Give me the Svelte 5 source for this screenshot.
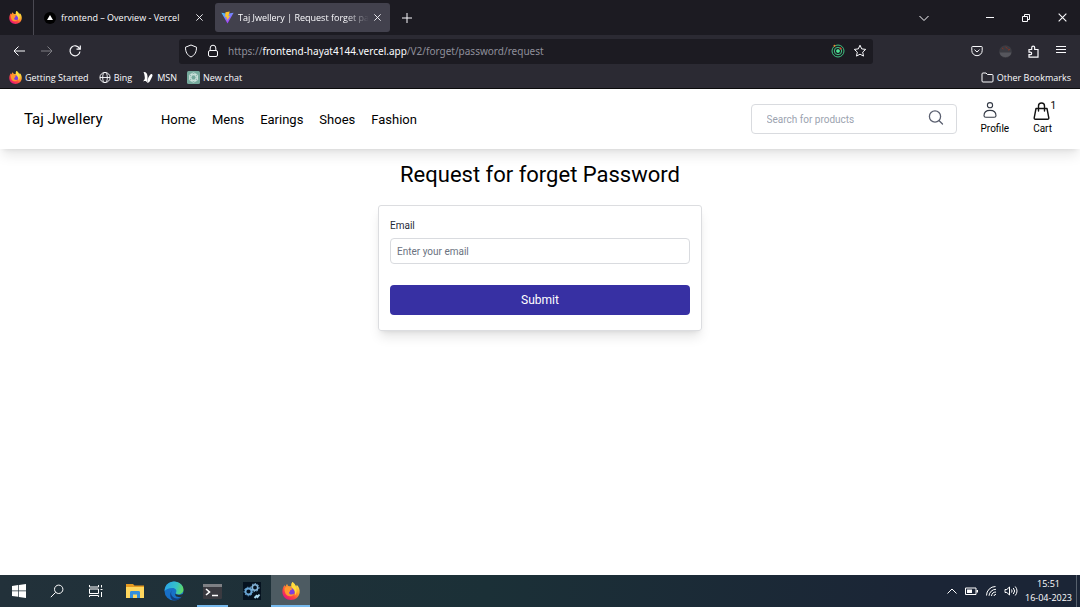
<script lang="ts">
    const categories = ['Home', 'Mens', 'Earings', 'Shoes', 'Fashion'];

    let search = $state('');
    let email = $state('');

    const cartCount = 1;
</script>

{#snippet firefox(size: number)}
    <svg width={size} height={size} viewBox="0 0 24 24" aria-hidden="true">
        <defs>
            <linearGradient id="fox-body" x1="0.85" y1="0.1" x2="0.2" y2="0.95">
                <stop offset="0" stop-color="#fff04a" />
                <stop offset="0.35" stop-color="#ffa52b" />
                <stop offset="0.65" stop-color="#ff4a3d" />
                <stop offset="1" stop-color="#e4127d" />
            </linearGradient>
        </defs>
        <path fill="url(#fox-body)" d="M14 0c3 2 4 4 4.500 6 1-.5 1-1.500 1-2.500C22.500 6 24 9.500 23.500 14c-.6 6-5.500 10-11.500 10C5.500 24 .5 19.500.5 13c0-3.500 1-6.500 3-9 .2 1 .5 1.500 1 2C5.500 4 6 3 7 2.500 7 4 8 5 9.500 5.500h3C12 3.500 12.500 1.500 14 0z" />
        <circle cx="12" cy="12.500" r="5" fill="#7c3fe0" />
        <path fill="#ff9a2e" d="M3.500 8c3-2.500 6-1.500 7.500 0l3 .5c-.3 1.500-2.500 1.800-3 2.500-.5 1 0 2-1.500 2.500-.5 3 3.500 4 6.500 2-2 5-9.500 4.500-11.500-.5C3.500 12.500 3 10 3.500 8z" />
        <path fill="#ffdc3e" d="M14 0c3 2.500 4.500 5 5 8.500 1 3.500.5 7-2 9.500 1-3 .5-6-1.500-8C13 7.500 11.500 4 14 0z" />
    </svg>
{/snippet}

{#snippet closeIcon(size: number)}
    <svg class="line" width={size} height={size} viewBox="0 0 10 10" aria-hidden="true">
        <path d="M1.500 1.500l7 7M8.500 1.500l-7 7" />
    </svg>
{/snippet}

<div class="screen">
    <div class="chrome">
        <div class="tabs">
            <div class="pinned">{@render firefox(13)}</div>
            <div class="tab">
                <svg width="12" height="12" viewBox="0 0 12 12" aria-hidden="true">
                    <circle cx="6" cy="6" r="6" fill="#000" />
                    <path d="M6 3l3 5H3z" fill="#fff" />
                </svg>
                <span class="title">frontend – Overview - Vercel</span>
                <button aria-label="Close tab">{@render closeIcon(9)}</button>
            </div>
            <div class="tab active">
                <svg width="13" height="13" viewBox="0 0 32 32" aria-hidden="true">
                    <defs>
                        <linearGradient id="vite" x1="0" y1="0" x2="0.6" y2="1">
                            <stop offset="0" stop-color="#41d1ff" />
                            <stop offset="1" stop-color="#b32dfe" />
                        </linearGradient>
                    </defs>
                    <path fill="url(#vite)" d="M1 4l14 2.500L31 4 16 31z" />
                    <path fill="#ffc329" d="M21.500 1L11 3l-.8 12 4-.8-1 5 3-.8-1.500 7L22 12l-4 .8z" />
                </svg>
                <span class="title faded">Taj Jwellery | Request forget pas</span>
                <button aria-label="Close tab">{@render closeIcon(9)}</button>
            </div>
            <button class="new-tab" aria-label="New tab">
                <svg class="line" width="12" height="12" viewBox="0 0 12 12"><path d="M6 1v10M1 6h10" /></svg>
            </button>
            <div class="window">
                <button class="list-tabs" aria-label="List all tabs">
                    <svg class="line" width="12" height="12" viewBox="0 0 12 12"><path d="M1.500 4L6 8.500 10.500 4" /></svg>
                </button>
                <button aria-label="Minimise">
                    <svg class="line" width="10" height="10" viewBox="0 0 10 10"><path d="M1 4.500h8" /></svg>
                </button>
                <button aria-label="Restore">
                    <svg class="line" width="10" height="10" viewBox="0 0 10 10"><path d="M1.500 3.500h5v5h-5zM3.500 3.500v-2h5v5h-2" /></svg>
                </button>
                <button aria-label="Close">{@render closeIcon(11)}</button>
            </div>
        </div>

        <div class="toolbar">
            <div class="history">
                <button aria-label="Back">
                    <svg class="line" width="14" height="14" viewBox="0 0 14 14"><path d="M13 7H2M6.500 2.500L2 7l4.500 4.500" /></svg>
                </button>
                <button aria-label="Forward" disabled>
                    <svg class="line" width="14" height="14" viewBox="0 0 14 14"><path d="M1 7h11M7.500 2.500L12 7l-4.500 4.500" /></svg>
                </button>
                <button aria-label="Reload">
                    <svg class="line thick" width="14" height="14" viewBox="0 0 14 14"><path d="M11.500 4.500A5 5 0 1 0 12 7.500M12.300 1.500v3.700H8.500" /></svg>
                </button>
            </div>
            <div class="address">
                <svg class="line" width="14" height="14" viewBox="0 0 14 14" aria-hidden="true">
                    <path d="M7 1l5.500 2.200c0 4.800-1.500 7.800-5.500 9.800-4-2-5.500-5-5.500-9.800z" />
                </svg>
                <svg class="line" width="14" height="14" viewBox="0 0 14 14" aria-hidden="true">
                    <rect x="2.500" y="6.500" width="9" height="6" rx="1.500" />
                    <path d="M4.200 6.500V4a2.800 2.800 0 0 1 5.600 0v2.500" />
                </svg>
                <div class="url" role="textbox" tabindex="0" aria-label="Address" contenteditable="true">https://<b>frontend-hayat4144.vercel.app</b>/V2/forget/password/request</div>
                <svg width="14" height="14" viewBox="0 0 14 14" fill="none" stroke="#3fc281" aria-hidden="true">
                    <circle cx="7" cy="7" r="6" />
                    <circle cx="7" cy="7" r="3.700" />
                    <circle cx="7" cy="7" r="1.500" fill="#5cf0a0" />
                    <circle cx="9.500" cy="4.500" r="1" fill="#f0452f" stroke="none" />
                    <circle cx="3.500" cy="1.800" r="1" fill="#f0852f" stroke="none" />
                </svg>
                <button aria-label="Bookmark this page">
                    <svg class="line" width="14" height="14" viewBox="0 0 14 14"><path d="M7 1.200l1.700 3.700 4 .5-3 2.700.8 4L7 10.200l-3.500 1.900.8-4-3-2.700 4-.5z" /></svg>
                </button>
            </div>
            <div class="tools">
                <button aria-label="Save to Pocket">
                    <svg class="line" width="12" height="12" viewBox="0 0 12 12"><path d="M1.500 1.500h9a.7.7 0 0 1 .7.700V5.500a5.200 5.200 0 0 1-10.400 0V2.200a.7.7 0 0 1 .7-.700zM3.500 4.700L6 7l2.500-2.300" /></svg>
                </button>
                <button aria-label="Extension">
                    <svg width="13" height="13" viewBox="0 0 13 13">
                        <circle cx="6.500" cy="6.500" r="6.300" fill="#3b3b42" />
                        <path d="M.5 7.500a6.200 6.200 0 0 0 12 0z" fill="#56565d" />
                        <path d="M3 3l1.500 1M6.500 2l2 1.500M9 5l2-.5" stroke="#853224" />
                    </svg>
                </button>
                <button aria-label="Extensions">
                    <svg class="line thick" width="13" height="13" viewBox="0 0 13 13"><path d="M2 4.500h2.700V2.700a1.500 1.500 0 0 1 3 0v1.800h3.300v7.700H2V9.700h1.300a1.300 1.300 0 0 0 0-2.600H2z" /></svg>
                </button>
                <button aria-label="Menu">
                    <svg class="line" width="12" height="12" viewBox="0 0 12 12"><path d="M1 1.500h10M1 4.500h10M1 7.500h10" /></svg>
                </button>
            </div>
        </div>

        <div class="bookmarks">
            <a href="#start">{@render firefox(13)}Getting Started</a>
            <a href="#bing">
                <svg class="line" width="12" height="13" viewBox="0 0 13 13" aria-hidden="true">
                    <circle cx="6.500" cy="6.500" r="5.500" />
                    <ellipse cx="6.500" cy="6.500" rx="2.500" ry="5.500" />
                    <path d="M1 6.500h11" />
                </svg>Bing
            </a>
            <a href="#msn">
                <svg width="12" height="13" viewBox="0 0 12 13" fill="#fff" aria-hidden="true">
                    <path d="M1.500 1c2.500-.3 4 1.500 4 4.500V12C4 10 3.500 9.500 1 10.500c1-1.500 2-2 1.800-4S2.300 2.500 1.500 1z" />
                    <path d="M5.500 12c-.3-4 1.500-7.500 3.500-9 1.500-.5 2 1.500 1 3L8.500 9c-.7 1.500-1.500 2.500-3 3z" />
                </svg>MSN
            </a>
            <a href="#chat">
                <svg width="13" height="13" viewBox="0 0 13 13" aria-hidden="true">
                    <rect width="13" height="13" rx="1.500" fill="#75a99c" />
                    <g fill="none" stroke="#e2f0ec" stroke-width=".7">
                        <ellipse cx="6.500" cy="6.500" rx="2.500" ry="4.700" />
                        <ellipse cx="6.500" cy="6.500" rx="2.500" ry="4.700" transform="rotate(60 6.500 6.500)" />
                        <ellipse cx="6.500" cy="6.500" rx="2.500" ry="4.700" transform="rotate(120 6.500 6.500)" />
                    </g>
                </svg>New chat
            </a>
            <a class="other" href="#other">
                <svg class="line" width="13" height="13" viewBox="0 0 13 13" aria-hidden="true"><path d="M1 3a1 1 0 0 1 1-1h3l1.500 1.500H11a1 1 0 0 1 1 1v5.500a1 1 0 0 1-1 1H2a1 1 0 0 1-1-1z" /></svg>Other Bookmarks
            </a>
        </div>
    </div>

    <div class="site">
        <header>
            <a class="brand" href="#home">Taj Jwellery</a>
            <nav>
                {#each categories as category}
                    <a href="#{category.toLowerCase()}">{category}</a>
                {/each}
            </nav>
            <form class="search">
                <input type="text" aria-label="Search for products" placeholder="Search for products" bind:value={search} />
                <button type="button" aria-label="Search">
                    <svg width="16" height="18" viewBox="0 0 16 18" fill="none" stroke="#5b6070" stroke-width="1.300" stroke-linecap="round">
                        <circle cx="7" cy="6.500" r="5.600" />
                        <path d="M11.200 10.700L14.500 14" />
                    </svg>
                </button>
            </form>
            <a class="account" href="#profile">
                <svg width="18" height="18" viewBox="0 0 18 18" fill="none" stroke="#343a46" stroke-width="1.100" aria-hidden="true">
                    <circle cx="9" cy="3.200" r="2.600" />
                    <path d="M3 13.700c0-3.500 2.500-5.300 6-5.300s6 1.800 6 5.300c0 1-.8 1.500-1.800 1.500H4.800c-1 0-1.800-.5-1.800-1.500z" />
                </svg>
                Profile
            </a>
            <a class="account cart" href="#cart">
                <svg width="18" height="18" viewBox="0 0 18 18" fill="none" stroke="#111" stroke-width="1.400" stroke-linejoin="round" stroke-linecap="round" aria-hidden="true">
                    <path d="M3 6.500h11l1.800 9.300c.1.800-.3 1.500-1.200 1.500H2.400c-.9 0-1.300-.7-1.200-1.500zM5.500 9V4a3 3 0 0 1 6 0v5" />
                </svg>
                Cart
                <span class="count">{cartCount}</span>
            </a>
        </header>

        <main>
            <h1>Request for forget Password</h1>
            <form class="card">
                <label for="email">Email</label>
                <input id="email" type="email" placeholder="Enter your email" bind:value={email} />
                <button type="button">Submit</button>
            </form>
        </main>
    </div>

    <div class="taskbar">
        <button class="start" aria-label="Start">
            <svg width="14" height="14" viewBox="0 0 14 14" fill="#fff"><path d="M0 2l6.200-.9v5.500H0zM6.900 1L14 0v6.600H6.900zM0 7.300h6.200v5.500L0 12zM6.900 7.300H14V14l-7.100-1z" /></svg>
        </button>
        <button aria-label="Search">
            <svg class="line" width="14" height="14" viewBox="0 0 14 14"><circle cx="8.700" cy="5.300" r="4.200" /><path d="M5.700 8.300L.8 13.200" /></svg>
        </button>
        <button aria-label="Task view">
            <svg class="line" width="14" height="14" viewBox="0 0 14 14"><path d="M.5 1v2h9V1M.5 5h9v4.500h-9zM.5 13v-1.500h9V13M12.500 1v2.500M12.500 8v5M11.500 5.500h2" /></svg>
        </button>
        <button aria-label="File Explorer">
            <svg width="18" height="16" viewBox="0 0 18 16">
                <path d="M0 1h7l1.500 1.500H18V14H0z" fill="#e69a20" />
                <path d="M0 4h18v11H0z" fill="#ffd75e" />
                <path d="M4 15V9.500C4 8.500 4.500 8 5.500 8h7c1 0 1.500.5 1.500 1.500V15h-3v-3.500H7V15z" fill="#348fdd" />
            </svg>
        </button>
        <button aria-label="Edge">
            <svg width="20" height="20" viewBox="0 0 20 20">
                <defs>
                    <linearGradient id="edge" x1="0" y1="0.3" x2="1" y2="0.5">
                        <stop offset="0" stop-color="#2aa4e8" />
                        <stop offset="0.6" stop-color="#35c1c9" />
                        <stop offset="1" stop-color="#5fd964" />
                    </linearGradient>
                </defs>
                <circle cx="10" cy="10" r="9.500" fill="#1870c8" />
                <path fill="url(#edge)" d="M.5 10C.8 4 5 .5 10 .5c5.500 0 9.500 4 9.500 8 0 3-2.200 4.800-5 4.800-2 0-3.200-.8-2.500-1.800 1.200-2-.3-4.500-3.500-4.500C4.500 7 1.500 8.500.5 10z" />
                <path fill="#123f80" d="M8.200 9c-3 4 .5 8.500 5 8.500 2 0 3.500-.7 4.800-1.700-1.500 2.200-4.500 3.700-8 3.700-4-1-5-7-1.800-10.500z" />
                <path fill="#22313a" d="M11.500 12.500c1.500 2 5 1.800 8 .3l-.9 2.700c-3 1.500-8.500.5-7.100-3z" />
            </svg>
        </button>
        <button class="running" aria-label="Terminal">
            <svg width="19" height="15" viewBox="0 0 19 15">
                <rect width="19" height="15" rx="1" fill="#3a3a40" />
                <path d="M0 0h19v3H0z" fill="#7e8084" />
                <path d="M3 5l3.500 3L3 11M9 11.500h6" fill="none" stroke="#fff" stroke-width="1.600" />
            </svg>
        </button>
        <button aria-label="Settings tool">
            <svg width="18" height="18" viewBox="0 0 18 18" fill="none">
                <path d="M0 0h18v18H0z" fill="#05121f" />
                <circle cx="5.500" cy="9.500" r="3" stroke="#69a6d6" stroke-width="1.800" />
                <circle cx="5.500" cy="9.500" r="4.300" stroke="#69a6d6" stroke-dasharray="1.500 1.500" />
                <circle cx="12" cy="5.500" r="2.700" stroke="#86b8dc" stroke-width="1.600" />
                <circle cx="12" cy="5.500" r="4" stroke="#86b8dc" stroke-dasharray="1.500 1.500" />
                <path d="M11.500 16l2-2 1 1 2-2.500" stroke="#a9d7ee" stroke-width="2" />
            </svg>
        </button>
        <button class="running current" aria-label="Firefox">{@render firefox(18)}</button>

        <div class="tray">
            <svg class="line" width="12" height="12" viewBox="0 0 12 12" aria-hidden="true"><path d="M1.500 8.500L6 4l4.500 4.500" /></svg>
            <svg width="13" height="12" viewBox="0 0 13 12" aria-hidden="true">
                <path d="M.5 3h10.500v6.500H.5z" fill="none" stroke="#fff" />
                <path d="M2 4.500h5V8H2zM11.500 5H13v2.500h-1.500z" fill="#fff" />
            </svg>
            <svg class="line" width="12" height="12" viewBox="0 0 12 12" aria-hidden="true"><path d="M1.500 10.500A9 9 0 0 1 10.500 1.500M4 10.800a7 7 0 0 1 7-6.500M6.500 11A4.500 4.500 0 0 1 11 7M9 11a2 2 0 0 1 2-1.700" /></svg>
            <svg class="line" width="14" height="12" viewBox="0 0 14 12" aria-hidden="true"><path d="M1 4.500h1.800L5.500 2v8L2.800 7.500H1zM7.500 4.500a2.500 2.500 0 0 1 0 3M9.300 3a4.500 4.500 0 0 1 0 6M11.200 1.500a6.500 6.500 0 0 1 0 9" /></svg>
            <div class="clock">
                <time>15:51</time>
                <time>16-04-2023</time>
            </div>
        </div>
    </div>
</div>

<style>
    :global(body) {
        margin: 0;
        background: #fff;
    }

    .screen {
        display: flex;
        flex-direction: column;
        min-height: 100vh;
        font-family: Roboto, sans-serif;
        color: #000;
    }

    .screen * {
        box-sizing: border-box;
    }

    svg {
        display: block;
        flex: none;
    }

    a {
        color: inherit;
        text-decoration: none;
    }

    button {
        display: flex;
        align-items: center;
        justify-content: center;
        padding: 0;
        border: 0;
        background: none;
        color: inherit;
        font: inherit;
    }

    .line {
        fill: none;
        stroke: currentColor;
    }

    .thick {
        stroke-width: 1.2;
    }

    /* browser */
    .chrome {
        background: #2b2a33;
        border-bottom: 1px solid #0c0c0d;
        color: #fbfbfe;
        font-family: "Open Sans", "Noto Sans", sans-serif;
        font-size: 9px;
    }

    .tabs {
        display: flex;
        align-items: center;
        height: 35px;
        background: #1c1b22;
    }

    .pinned {
        display: flex;
        align-items: center;
        height: 100%;
        padding: 0 11px 0 9px;
        border-right: 1px solid #4a4952;
    }

    .tab {
        display: flex;
        align-items: center;
        gap: 5px;
        width: 175px;
        height: 29px;
        margin-left: 6px;
        padding: 0 11px 0 4px;
        border-radius: 3px;
    }

    .tab.active {
        gap: 4px;
        margin-left: 0;
        padding: 0 8px 0 6px;
        background: #42414d;
    }

    .tab .title {
        flex: 1;
        min-width: 0;
        white-space: nowrap;
    }

    .tab .faded {
        mask-image: linear-gradient(to left, transparent, #000 24px);
    }

    .new-tab {
        width: 34px;
        height: 29px;
    }

    .window {
        display: flex;
        margin-left: auto;
    }

    .window button {
        width: 36px;
        height: 35px;
    }

    .window .list-tabs {
        margin-right: 30px;
    }

    .toolbar {
        display: flex;
        align-items: center;
        height: 32px;
    }

    .history {
        display: flex;
        width: 179px;
        padding-left: 5px;
    }

    .history button,
    .tools button {
        width: 28px;
        height: 28px;
    }

    .history button:disabled {
        opacity: .4;
    }

    .address {
        display: flex;
        align-items: center;
        flex: 1;
        gap: 8px;
        height: 25px;
        padding: 0 6px 0 5px;
        border-radius: 3px;
        background: #1c1b22;
    }

    .url {
        flex: 1;
        color: #8f8f9a;
        font-family: "Noto Sans", sans-serif;
        font-size: 10px;
        outline: none;
        white-space: nowrap;
    }

    .url b {
        color: #fbfbfe;
        font-weight: 400;
    }

    .tools {
        display: flex;
        justify-content: flex-end;
        width: 207px;
        padding-right: 5px;
    }

    .bookmarks {
        display: flex;
        align-items: center;
        gap: 10px;
        height: 21px;
        padding: 0 9px;
    }

    .bookmarks a {
        display: flex;
        align-items: center;
        gap: 3px;
    }

    .bookmarks .other {
        margin-left: auto;
    }

    /* shop page */
    .site {
        flex: 1;
    }

    header {
        display: flex;
        align-items: center;
        height: 60px;
        padding: 0 24px;
        box-shadow: 0 8px 12px -2px rgba(0, 0, 0, .1), 0 3px 5px -3px rgba(0, 0, 0, .1);
    }

    .brand {
        width: 137px;
        font-size: 15px;
    }

    nav {
        display: flex;
        gap: 16px;
        font-size: 13px;
    }

    .search {
        display: flex;
        align-items: center;
        width: 206px;
        height: 30px;
        margin-left: auto;
        padding: 0 12px 0 15px;
        border: 1px solid #d9dbdf;
        border-radius: 4px;
    }

    .search input {
        flex: 1;
        min-width: 0;
        padding: 0;
        border: 0;
        outline: none;
        font: 10px Roboto, sans-serif;
    }

    .search input::placeholder {
        color: #9ca3af;
    }

    .account {
        display: flex;
        flex-direction: column;
        gap: 2px;
        margin: 0 0 2px 24px;
        font-size: 10px;
        line-height: 13px;
    }

    .cart {
        position: relative;
        margin-right: 4px;
    }

    .count {
        position: absolute;
        top: -3px;
        right: -4px;
    }

    main {
        display: flex;
        align-items: center;
        flex-direction: column;
        gap: 16px;
        padding-top: 12px;
    }

    h1 {
        margin: 0;
        font-size: 22px;
        font-weight: 400;
        line-height: 28px;
    }

    .card {
        display: flex;
        flex-direction: column;
        width: 30%;
        min-width: 300px;
        padding: 12px 11px 15px;
        border: 1px solid #dcdde0;
        border-radius: 3px;
        box-shadow: 0 8px 12px -2px rgba(0, 0, 0, .1), 0 3px 5px -3px rgba(0, 0, 0, .1);
    }

    .card label {
        margin-bottom: 5px;
        color: #1f2937;
        font-size: 10px;
        line-height: 15px;
    }

    .card input {
        height: 26px;
        padding: 0 6px;
        border: 1px solid #d9dbdf;
        border-radius: 4px;
        outline: none;
        font: 10px Roboto, sans-serif;
    }

    .card input::placeholder {
        color: #6b7280;
    }

    .card button {
        height: 30px;
        margin-top: 21px;
        border-radius: 4px;
        background: #3730a3;
        color: #fff;
        font-size: 12px;
    }

    /* desktop */
    .taskbar {
        display: flex;
        height: 32px;
        background: linear-gradient(to right, #22313a, #1b3037 45%, #1b2536 85%);
        color: #fff;
        font-family: "Open Sans", "Noto Sans", sans-serif;
        font-size: 9px;
    }

    .taskbar button {
        width: 39px;
    }

    .taskbar .start {
        width: 37px;
    }

    .running {
        background: linear-gradient(#76b9ed, #76b9ed) bottom / 31px 2px no-repeat;
    }

    .running.current {
        background: linear-gradient(#76b9ed, #76b9ed) bottom / 100% 2px no-repeat #4d5b62;
    }

    .tray {
        display: flex;
        align-items: center;
        gap: 7px;
        margin-left: auto;
        padding-right: 4px;
        border-right: 1px solid #56606c;
        margin-right: 3px;
    }

    .clock {
        display: flex;
        align-items: center;
        flex-direction: column;
        line-height: 14px;
    }
</style>
